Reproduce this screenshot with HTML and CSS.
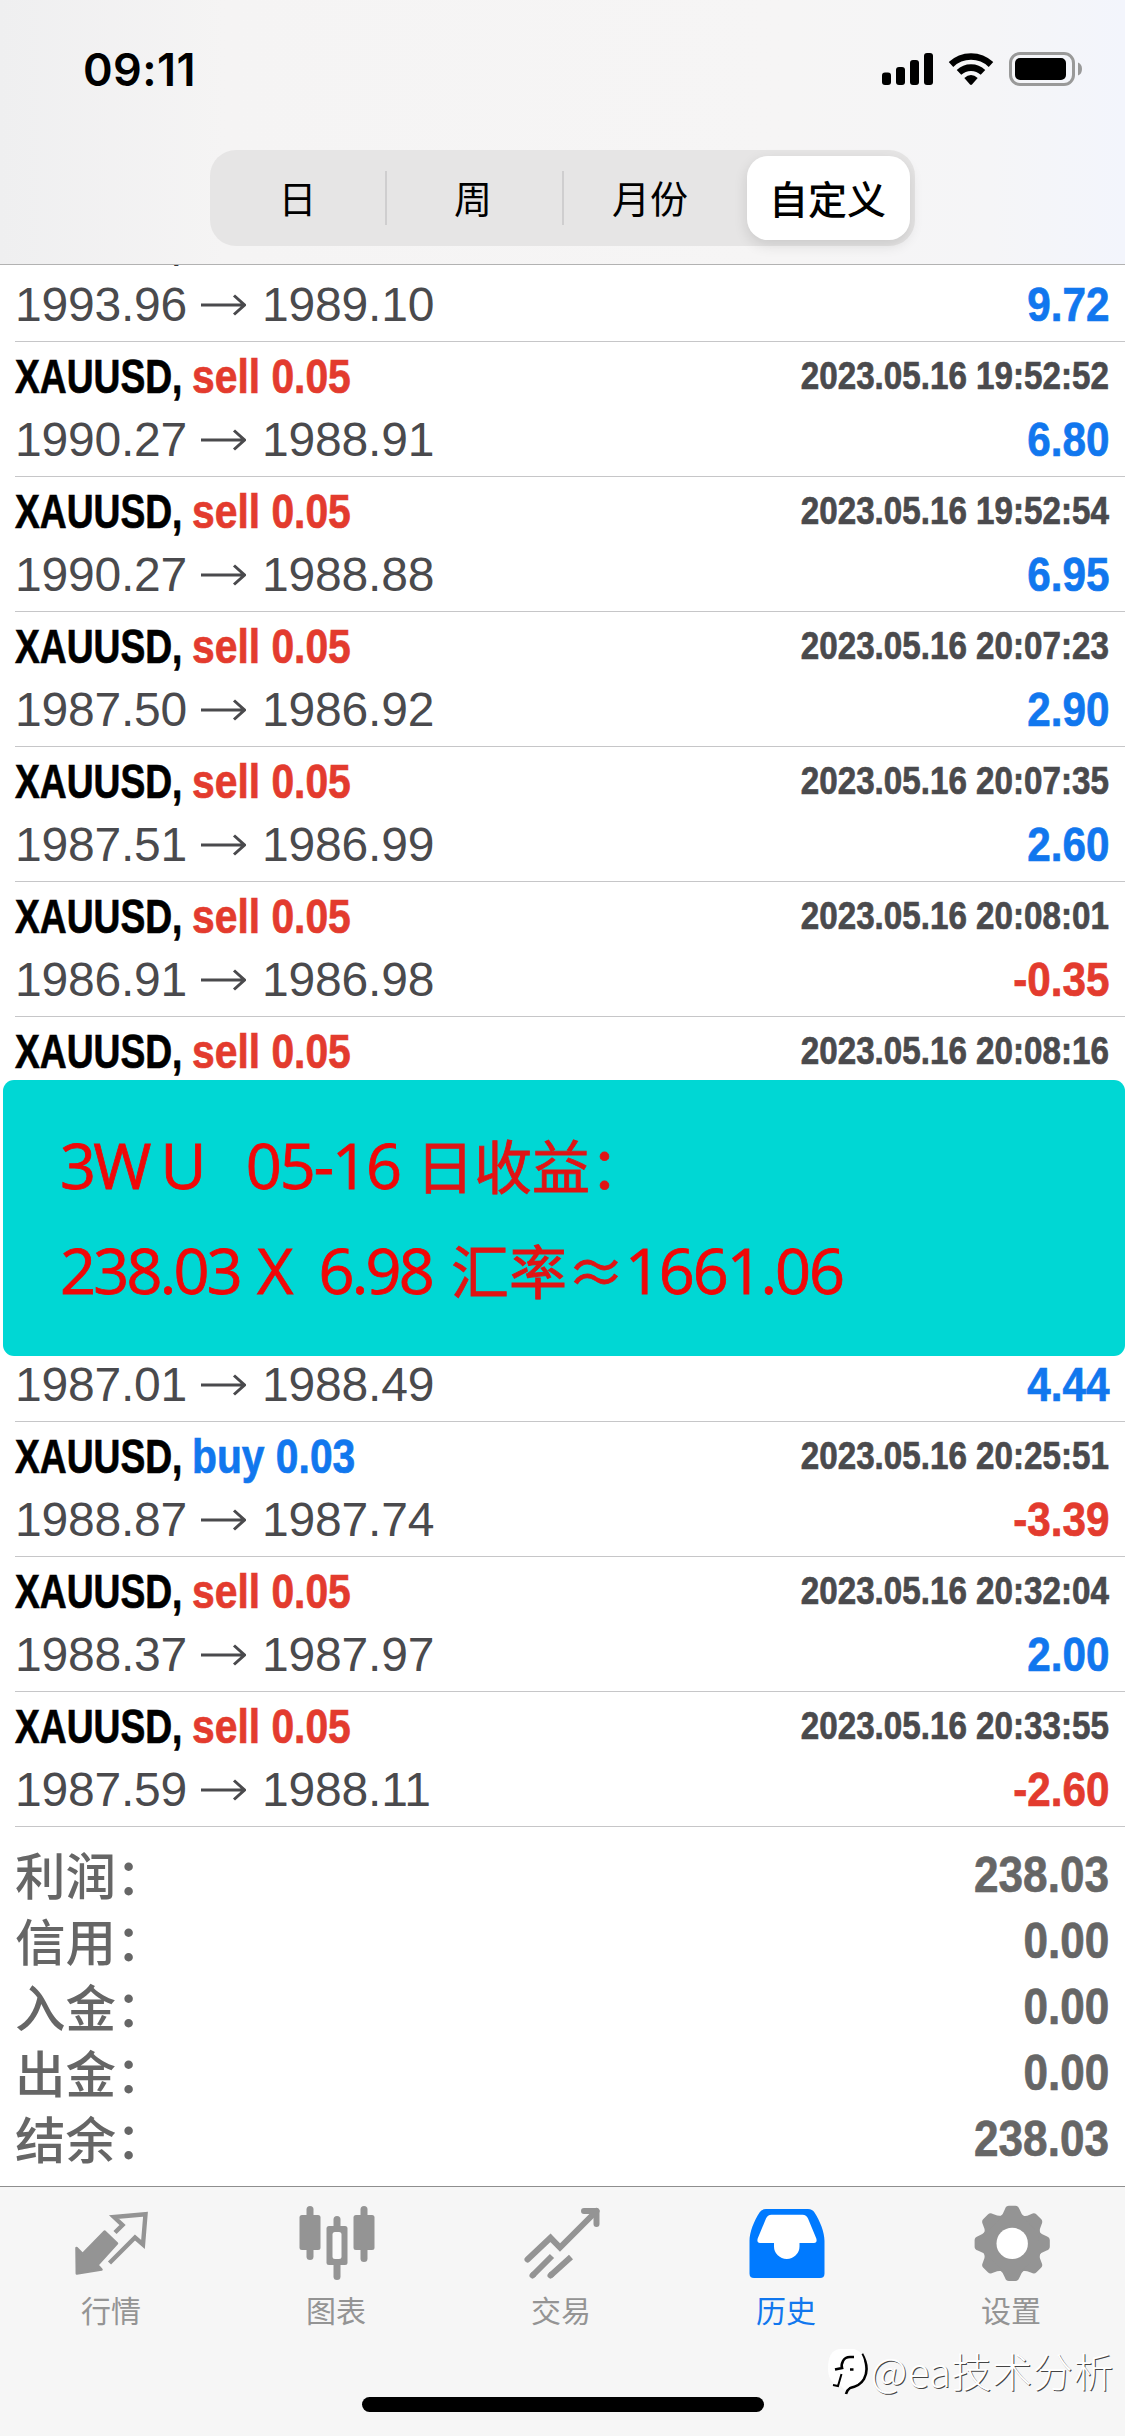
FILE: index.html
```html
<!DOCTYPE html>
<html lang="zh-CN">

<head>
    <meta charset="UTF-8">
    <meta name="viewport" content="width=device-width, initial-scale=1.0">
    <title>历史</title>
    <link rel="stylesheet" href="styles.css">
</head>

<body>
    <div class="header">
        <div class="status-bar">
            <span class="time">09:11</span>
            <svg class="status-icons" width="206" height="40" viewBox="0 0 206 40">
                <rect x="2" y="22.5" width="9" height="12.5" rx="3" />
                <rect x="16" y="17" width="9" height="18" rx="3" />
                <rect x="30" y="10" width="9" height="25" rx="3" />
                <rect x="44" y="3" width="9" height="32" rx="3" />
                <g fill="none" stroke="#000" stroke-width="6.6">
                    <path d="M71 14.5A29 29 0 0 1 111 14.5" />
                    <path d="M79 22.4A17.5 17.5 0 0 1 103 22.4" />
                </g>
                <path d="M84.3 28Q91 22 97.7 28L92 34.5Q91 35.3 90 34.5Z" />
                <rect x="130.5" y="3.5" width="63" height="31" rx="9.5" fill="none" stroke="#999" stroke-width="3" />
                <rect x="135" y="8" width="51" height="22" rx="5" />
                <path d="M198 12.5Q202 14 202 19T198 25.5Z" fill="#999" />
            </svg>
        </div>
        <div class="segment">
            <span class="seg-item">日</span>
            <span class="seg-item seg-line">周</span>
            <span class="seg-item seg-line">月份</span>
            <span class="seg-item active">自定义</span>
        </div>
    </div>

    <div class="history">
        <div class="deal first">
            <div class="line"><span class="symbol">XAUUSD,</span></div>
            <div class="line"><span class="price">1993.96</span><svg class="arrow" viewBox="0 0 45 22"><path d="M0 11H44M33 1.5L43.5 11L33 20.5" /></svg><span class="price">1989.10</span><span class="profit blue">9.72</span></div>
        </div>
        <div class="deal">
            <div class="line"><span class="symbol">XAUUSD,</span><span class="side red">sell 0.05</span><span class="date">2023.05.16 19:52:52</span></div>
            <div class="line"><span class="price">1990.27</span><svg class="arrow" viewBox="0 0 45 22"><path d="M0 11H44M33 1.5L43.5 11L33 20.5" /></svg><span class="price">1988.91</span><span class="profit blue">6.80</span></div>
        </div>
        <div class="deal">
            <div class="line"><span class="symbol">XAUUSD,</span><span class="side red">sell 0.05</span><span class="date">2023.05.16 19:52:54</span></div>
            <div class="line"><span class="price">1990.27</span><svg class="arrow" viewBox="0 0 45 22"><path d="M0 11H44M33 1.5L43.5 11L33 20.5" /></svg><span class="price">1988.88</span><span class="profit blue">6.95</span></div>
        </div>
        <div class="deal">
            <div class="line"><span class="symbol">XAUUSD,</span><span class="side red">sell 0.05</span><span class="date">2023.05.16 20:07:23</span></div>
            <div class="line"><span class="price">1987.50</span><svg class="arrow" viewBox="0 0 45 22"><path d="M0 11H44M33 1.5L43.5 11L33 20.5" /></svg><span class="price">1986.92</span><span class="profit blue">2.90</span></div>
        </div>
        <div class="deal">
            <div class="line"><span class="symbol">XAUUSD,</span><span class="side red">sell 0.05</span><span class="date">2023.05.16 20:07:35</span></div>
            <div class="line"><span class="price">1987.51</span><svg class="arrow" viewBox="0 0 45 22"><path d="M0 11H44M33 1.5L43.5 11L33 20.5" /></svg><span class="price">1986.99</span><span class="profit blue">2.60</span></div>
        </div>
        <div class="deal">
            <div class="line"><span class="symbol">XAUUSD,</span><span class="side red">sell 0.05</span><span class="date">2023.05.16 20:08:01</span></div>
            <div class="line"><span class="price">1986.91</span><svg class="arrow" viewBox="0 0 45 22"><path d="M0 11H44M33 1.5L43.5 11L33 20.5" /></svg><span class="price">1986.98</span><span class="profit red">-0.35</span></div>
        </div>
        <div class="deal">
            <div class="line"><span class="symbol">XAUUSD,</span><span class="side red">sell 0.05</span><span class="date">2023.05.16 20:08:16</span></div>
            <div class="line"></div>
        </div>
        <div class="deal">
            <div class="line"></div>
            <div class="line"></div>
        </div>
        <div class="deal">
            <div class="line"></div>
            <div class="line"><span class="price">1987.01</span><svg class="arrow" viewBox="0 0 45 22"><path d="M0 11H44M33 1.5L43.5 11L33 20.5" /></svg><span class="price">1988.49</span><span class="profit blue">4.44</span></div>
        </div>
        <div class="deal">
            <div class="line"><span class="symbol">XAUUSD,</span><span class="side blue">buy 0.03</span><span class="date">2023.05.16 20:25:51</span></div>
            <div class="line"><span class="price">1988.87</span><svg class="arrow" viewBox="0 0 45 22"><path d="M0 11H44M33 1.5L43.5 11L33 20.5" /></svg><span class="price">1987.74</span><span class="profit red">-3.39</span></div>
        </div>
        <div class="deal">
            <div class="line"><span class="symbol">XAUUSD,</span><span class="side red">sell 0.05</span><span class="date">2023.05.16 20:32:04</span></div>
            <div class="line"><span class="price">1988.37</span><svg class="arrow" viewBox="0 0 45 22"><path d="M0 11H44M33 1.5L43.5 11L33 20.5" /></svg><span class="price">1987.97</span><span class="profit blue">2.00</span></div>
        </div>
        <div class="deal">
            <div class="line"><span class="symbol">XAUUSD,</span><span class="side red">sell 0.05</span><span class="date">2023.05.16 20:33:55</span></div>
            <div class="line"><span class="price">1987.59</span><svg class="arrow" viewBox="0 0 45 22"><path d="M0 11H44M33 1.5L43.5 11L33 20.5" /></svg><span class="price">1988.11</span><span class="profit red">-2.60</span></div>
        </div>

        <div class="summary">
            <div class="sum-row"><span>利润：</span><span class="amount">238.03</span></div>
            <div class="sum-row"><span>信用：</span><span class="amount">0.00</span></div>
            <div class="sum-row"><span>入金：</span><span class="amount">0.00</span></div>
            <div class="sum-row"><span>出金：</span><span class="amount">0.00</span></div>
            <div class="sum-row"><span>结余：</span><span class="amount">238.03</span></div>
        </div>

        <!-- note pinned over the list -->
        <div class="note">
            <div class="note-line"><span>3W</span><span class="n-u">U</span><span class="n-date">05-16</span><span class="cjk n-day">日收益：</span></div>
            <div class="note-line"><span>238.03</span><span class="n-x">X</span><span class="n-rate">6.98</span><span class="cjk n-hl">汇率≈</span><span class="n-total">1661.06</span></div>
        </div>
    </div>

    <div class="footer">
        <div class="tabs">
            <div class="tab">
                <svg width="80" height="80" viewBox="0 0 80 80">
                    <path d="M3.5 45L9.5 51L31.5 28.5L44 40.5L24.5 62L28.5 66.5L3.8 70.5Z" fill="#949494" stroke="#949494" stroke-width="2.5" stroke-linejoin="round" />
                    <path d="M42 29.5L49.5 22L41 14L72.5 11.2L70 41.5L62 34.5L36.5 60" fill="none" stroke="#949494" stroke-width="4.4" />
                </svg>
                <span>行情</span>
            </div>
            <div class="tab">
                <svg width="80" height="80" viewBox="0 0 80 80" fill="#949494">
                    <rect x="1.5" y="12" width="21" height="35" rx="2.5" />
                    <rect x="8.5" y="3" width="7" height="54" rx="3.5" />
                    <rect x="55.5" y="12" width="21" height="35" rx="2.5" />
                    <rect x="62.5" y="3" width="7" height="56" rx="3.5" />
                    <rect x="35.5" y="13" width="7" height="64" rx="3.5" />
                    <rect x="28.5" y="23" width="21" height="39" rx="2.5" />
                    <rect x="34.5" y="29" width="9" height="27" rx="2.5" fill="#fafafa" />
                </svg>
                <span>图表</span>
            </div>
            <div class="tab">
                <svg width="80" height="80" viewBox="0 0 80 80" fill="none" stroke="#949494" stroke-width="6">
                    <path d="M4.5 56.5L27.5 34.8L37 44.5L73.5 8" stroke-linecap="round" />
                    <path d="M61 8H73.5V21" stroke-linecap="round" stroke-linejoin="round" />
                    <path d="M29 53L9.5 72.5M48 54L27.5 72.5" />
                    <path d="M10 72L9.5 72.5M28 72L27.5 72.5" stroke-linecap="round" />
                </svg>
                <span>交易</span>
            </div>
            <div class="tab current">
                <svg width="80" height="80" viewBox="0 0 80 80">
                    <path d="M1.5 38C1.5 29 6 18 11.5 9.5Q13.5 6 18 6H60Q64.5 6 66.5 9.5C72 18 76.5 29 76.5 38V70.5Q76.5 75 72 75H6Q1.5 75 1.5 70.5Z" fill="#007aff" />
                    <path d="M23.5 11.7H54.5Q58.5 11.7 60 15.5L68.3 35.5Q69.5 40 66 40H51.5V43.5A12.75 12.5 0 0 1 26 43.5V40H12Q8.5 40 9.7 35.5L18 15.5Q19.5 11.7 23.5 11.7Z" fill="#fff" />
                </svg>
                <span>历史</span>
            </div>
            <div class="tab">
                <svg width="80" height="80" viewBox="0 0 80 80" fill="#949494">
                    <circle cx="39.2" cy="40.4" r="30" />
                    <path id="tooth" d="M26.5 14.5Q30.5 11 32 6Q33 2.8 36 2.8H42.4Q45.4 2.8 46.4 6Q48 11 52 14.5Z" />
                    <use href="#tooth" transform="rotate(45 39.2 40.4)" />
                    <use href="#tooth" transform="rotate(90 39.2 40.4)" />
                    <use href="#tooth" transform="rotate(135 39.2 40.4)" />
                    <use href="#tooth" transform="rotate(180 39.2 40.4)" />
                    <use href="#tooth" transform="rotate(225 39.2 40.4)" />
                    <use href="#tooth" transform="rotate(270 39.2 40.4)" />
                    <use href="#tooth" transform="rotate(315 39.2 40.4)" />
                    <circle cx="39.2" cy="40.4" r="15.7" fill="#fff" />
                </svg>
                <span>设置</span>
            </div>
        </div>
        <div class="home-bar"></div>
        <div class="watermark">
            <svg width="44" height="48" viewBox="0 0 44 48">
                <path d="M35 6Q43 20 37 31Q33 38 23 40Q20 42 19 46" fill="none" stroke="#000" stroke-width="2.6" />
                <path d="M12 1H27Q38 4 37.5 20Q37 36 25 37L18 42L14 38Q1 36 1 20Q1 3 12 1Z" fill="#fff" />
                <path d="M27 9H23Q18 9 16 13Q14 17 15 20L8 21.5M23 21.5H26.5" fill="none" stroke="#000" stroke-width="2.6" />
                <path d="M14.500 26L11 38L6 37" fill="none" stroke="#000" stroke-width="2" />
            </svg>
            <span>@ea技术分析</span>
        </div>
    </div>
</body>

</html>
```
FILE: styles.css
```css
* {
    box-sizing: border-box;
}

body {
    margin: 0;
    width: 1125px;
    height: 2436px;
    display: flex;
    flex-direction: column;
    overflow: hidden;
    background-color: #fff;
    font-family: "Liberation Sans", "Noto Sans CJK SC", sans-serif;
}

/* header */
.header {
    height: 265px;
    flex: none;
    background: linear-gradient(90deg, #efeff0 0, #f5f4f4 20%, #f6f5f5 70%, #f5f5f7 88%, #f3f5fc 100%);
    border-bottom: 1px solid #b2b2b2;
}

.status-bar {
    height: 150px;
    display: flex;
    justify-content: space-between;
    align-items: flex-start;
    padding: 42px 39px 0 83px;
}

.time {
    font-family: Inter, "Liberation Sans", sans-serif;
    font-weight: 600;
    font-size: 45px;
    line-height: 55px;
    letter-spacing: 0.4px;
}

.status-icons {
    margin-top: 8px;
}

.segment {
    width: 705px;
    height: 96px;
    margin-left: 210px;
    padding: 6px;
    display: flex;
    align-items: center;
    border-radius: 26px;
    background-color: #e6e5e5;
}

.seg-item {
    width: 177px;
    height: 54px;
    line-height: 52px;
    text-align: center;
    font-family: "Noto Sans CJK SC", sans-serif;
    font-size: 38px;
    flex: none;
}

.seg-item:first-child {
    width: 169px;
    padding-right: 6px;
}

.seg-line {
    border-left: 2px solid #cfcecf;
    padding-right: 3px;
}

.seg-item.active {
    width: 163px;
    height: 84px;
    line-height: 82px;
    margin-left: 8px;
    padding-right: 2px;
    border-radius: 21px;
    background-color: #fff;
    font-weight: 500;
    font-size: 39px;
    box-shadow: 0 5px 14px rgba(0, 0, 0, 0.12);
}

/* deals */
.history {
    position: relative;
    height: 1921px;
    flex: none;
    overflow: hidden;
}

.deal {
    height: 135px;
    margin-left: 15px;
    padding: 3px 16px 0 0;
    border-bottom: 1px solid #c6c6c8;
}

.deal.first {
    margin-top: -58px;
}

.line {
    display: flex;
    align-items: center;
    height: 63px;
    line-height: 63px;
    white-space: nowrap;
}

.symbol,
.side,
.date,
.profit,
.amount {
    font-weight: bold;
    font-size: 48px;
    -webkit-text-stroke: 0.7px currentColor;
}

.symbol {
    width: 177px;
    color: #000;
    transform: scaleX(0.775);
    transform-origin: left;
}

.side {
    transform: scaleX(0.85);
    transform-origin: left;
}

.date {
    margin-left: auto;
    font-size: 38px;
    color: #4a4a4d;
    transform: scaleX(0.873);
    transform-origin: right;
}

.price {
    font-size: 48px;
    letter-spacing: -0.2px;
    color: #4a4a4d;
}

.arrow {
    width: 45px;
    height: 22px;
    margin: 0 16px 0 14px;
    fill: none;
    stroke: #4a4a4d;
    stroke-width: 3;
}

.profit {
    margin-left: auto;
    transform: scaleX(0.88);
    transform-origin: right;
}

.red {
    color: #e33b2e;
}

.blue {
    color: #1177ee;
}

.summary {
    padding: 13px 16px 0 15px;
}

.sum-row {
    display: flex;
    justify-content: space-between;
    height: 66px;
    line-height: 66px;
    font-family: "Noto Sans CJK SC", sans-serif;
    font-weight: 500;
    font-size: 50.5px;
    color: #666;
}

.amount {
    font-family: "Liberation Sans", sans-serif;
    font-size: 50px;
    transform: translateY(2px) scaleX(0.882);
    transform-origin: right;
}

/* note */
.note {
    position: absolute;
    left: 3px;
    top: 815px;
    width: 1122px;
    height: 276px;
    padding: 32px 0 0 57px;
    border-radius: 11px;
    background-color: #00d7d4;
    color: #f00707;
}

.note-line {
    display: flex;
    height: 105px;
    line-height: 105px;
    white-space: pre;
    font-family: "Open Sans", sans-serif;
    font-size: 63px;
    letter-spacing: -2.8px;
    -webkit-text-stroke: 0.8px currentColor;
}

.cjk {
    font-family: "Noto Sans CJK SC", sans-serif;
    font-size: 58px;
    letter-spacing: 0;
    color: #e01414;
}

.n-u {
    margin-left: 12px;
}

.n-date {
    margin-left: 42px;
    letter-spacing: -2px;
}

.n-day {
    margin-left: 16px;
}

.n-x {
    margin-left: 17px;
}

.n-rate {
    margin-left: 28px;
}

.n-hl {
    margin-left: 19px;
}

.n-total {
    letter-spacing: -2.1px;
}

/* tab bar */
.footer {
    position: relative;
    height: 250px;
    background-color: #f6f6f6;
    border-top: 1px solid #8e8e8e;
}

.tabs {
    display: flex;
    padding-top: 16px;
}

.tab {
    width: 225px;
    display: flex;
    flex-direction: column;
    align-items: center;
    color: #949494;
    font-family: "Noto Sans CJK SC", sans-serif;
    font-size: 30px;
    line-height: 44px;
}

.tab span {
    margin: 4px 0 0 -3px;
}

.tab.current {
    color: #1177ee;
}

.home-bar {
    width: 402px;
    height: 15px;
    margin: 66px auto 0;
    border-radius: 8px;
    background-color: #000;
}

.watermark {
    position: absolute;
    right: 11px;
    bottom: 38px;
    display: flex;
    align-items: center;
    font-family: "Noto Sans CJK SC", sans-serif;
    font-weight: 300;
    font-size: 40px;
    line-height: 56px;
    letter-spacing: 0.6px;
    color: #fff;
    text-shadow: 1px 1px 0 #444;
}

.watermark svg {
    margin-top: 4px;
}
```
